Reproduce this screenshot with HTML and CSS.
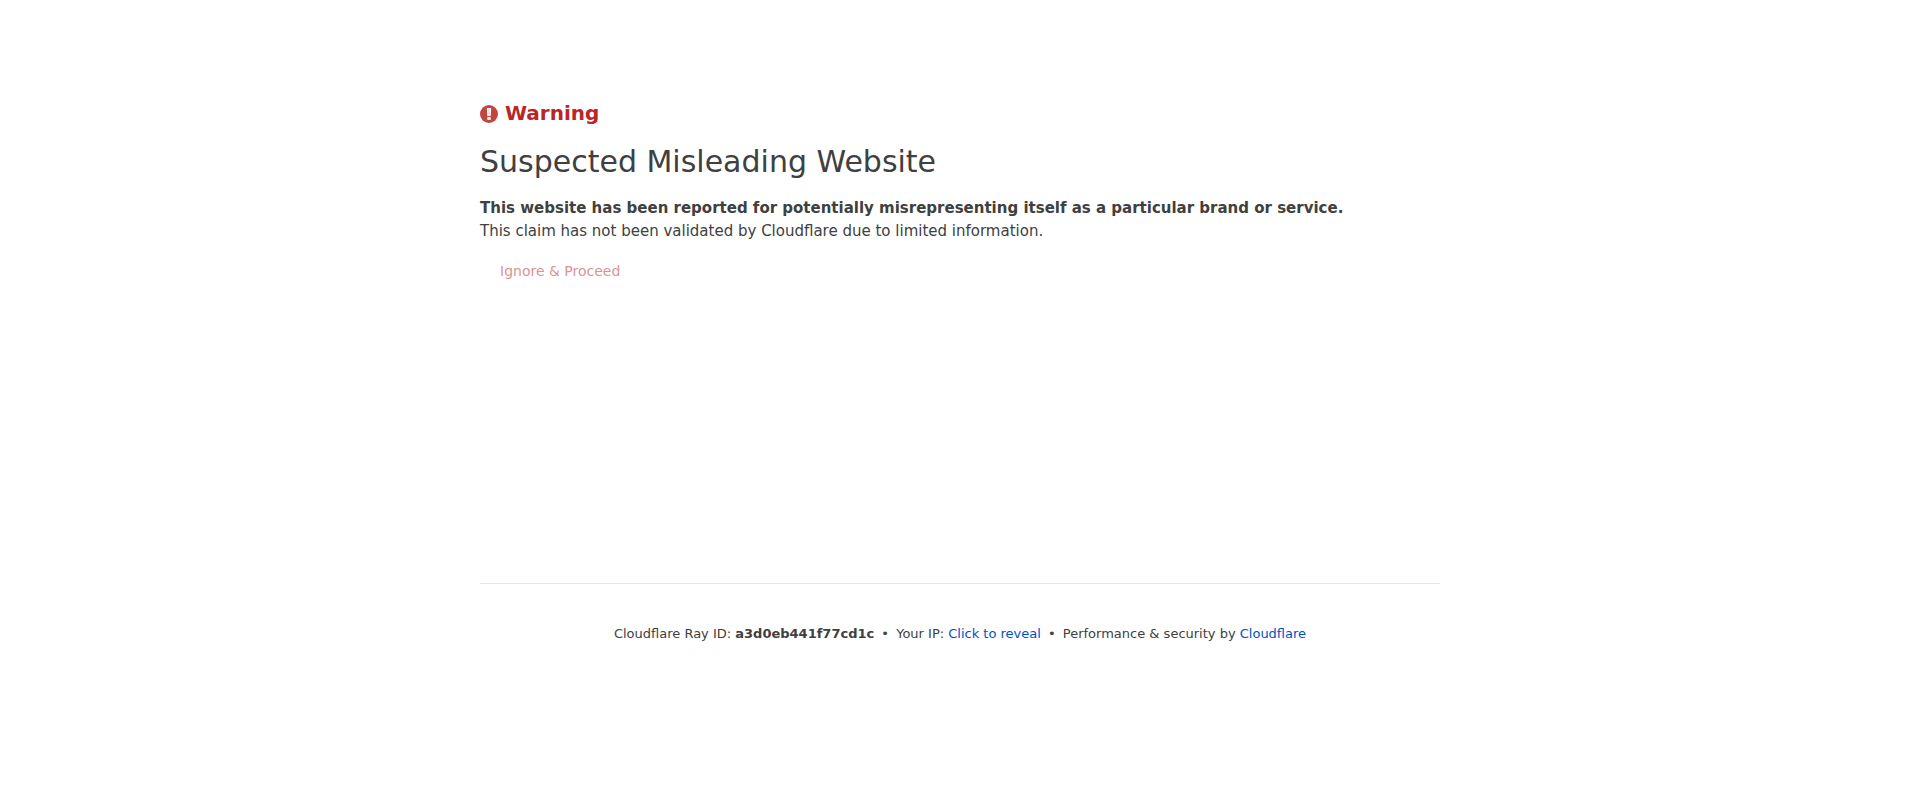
FILE: index.html
```html
<!DOCTYPE html>
<html lang="en-US">
<head>
    <meta charset="UTF-8">
    <meta name="viewport" content="width=device-width, initial-scale=1.0">
    <title>Suspected Misleading Website | Cloudflare</title>
    <link rel="stylesheet" href="styles.css">
</head>
<body>
    <div class="wrapper">
        <main class="section">
            <h2 class="warning">
                <svg class="icon-exclamation" viewBox="0 0 18 18" aria-hidden="true">
                    <circle cx="9" cy="9" r="9" fill="#c2453f"/>
                    <path d="M6.8 3h4.4l-.5 8H7.3z" fill="#fff"/>
                    <path d="M8.5 4h1l-.2 6h-.6z" fill="#e9b5b2"/>
                    <rect x="7.2" y="12" width="3.6" height="3" rx="1" fill="#fff"/>
                </svg>
                <span>Warning</span>
            </h2>
            <h1 class="title">Suspected Misleading Website</h1>
            <p class="message">
                <strong>This website has been reported for potentially misrepresenting itself as a particular brand or service.</strong><br>
                This claim has not been validated by Cloudflare due to limited information.
            </p>
            <form class="bypass" action="#" method="get">
                <button type="submit" class="btn" disabled>Ignore &amp; Proceed</button>
            </form>
        </main>

        <footer class="footer">
            <span>Cloudflare Ray ID: <strong>a3d0eb441f77cd1c</strong></span>
            <span class="separator">&bull;</span>
            <span>Your IP: <button type="button" class="reveal">Click to reveal</button></span>
            <span class="separator">&bull;</span>
            <span>Performance &amp; security by <a href="https://www.cloudflare.com/">Cloudflare</a></span>
        </footer>
    </div>
</body>
</html>
```

FILE: styles.css
```css
body {
    margin: 0;
    padding: 0;
    background: #fff;
    color: #404040;
    font-family: "DejaVu Sans", sans-serif;
    font-size: 15px;
    line-height: 23px;
}
.wrapper {
    max-width: 960px;
    margin: 0 auto;
    padding-top: 98px;
}
.section {
    min-height: 485px;
}
h1, h2, p {
    margin: 0;
}
.warning {
    display: flex;
    align-items: center;
    gap: 7px;
    color: #bd2426;
    font-size: 20px;
    line-height: 30px;
}
.icon-exclamation {
    width: 18px;
    height: 18px;
    margin-top: 2px;
}
.title {
    margin-top: 14px;
    font-size: 30px;
    font-weight: 400;
    line-height: 39px;
}
.message {
    margin-top: 16px;
}
.bypass {
    margin-top: 10px;
}
.btn {
    padding: 8px 20px;
    border: 0;
    background: transparent;
    color: #bd2426;
    font-family: inherit;
    font-size: 14px;
    line-height: 21px;
    opacity: 0.5;
}
.footer {
    padding: 40px 0;
    border-top: 1px solid #e5e5e5;
    font-size: 13px;
    line-height: 20px;
    text-align: center;
}
.separator {
    margin: 0 3px;
}
.footer a,
.reveal {
    color: #0051c3;
    text-decoration: none;
}
.reveal {
    padding: 0;
    border: 0;
    background: transparent;
    font: inherit;
    cursor: pointer;
}
.footer a:hover,
.reveal:hover {
    color: #ee730a;
}
```
